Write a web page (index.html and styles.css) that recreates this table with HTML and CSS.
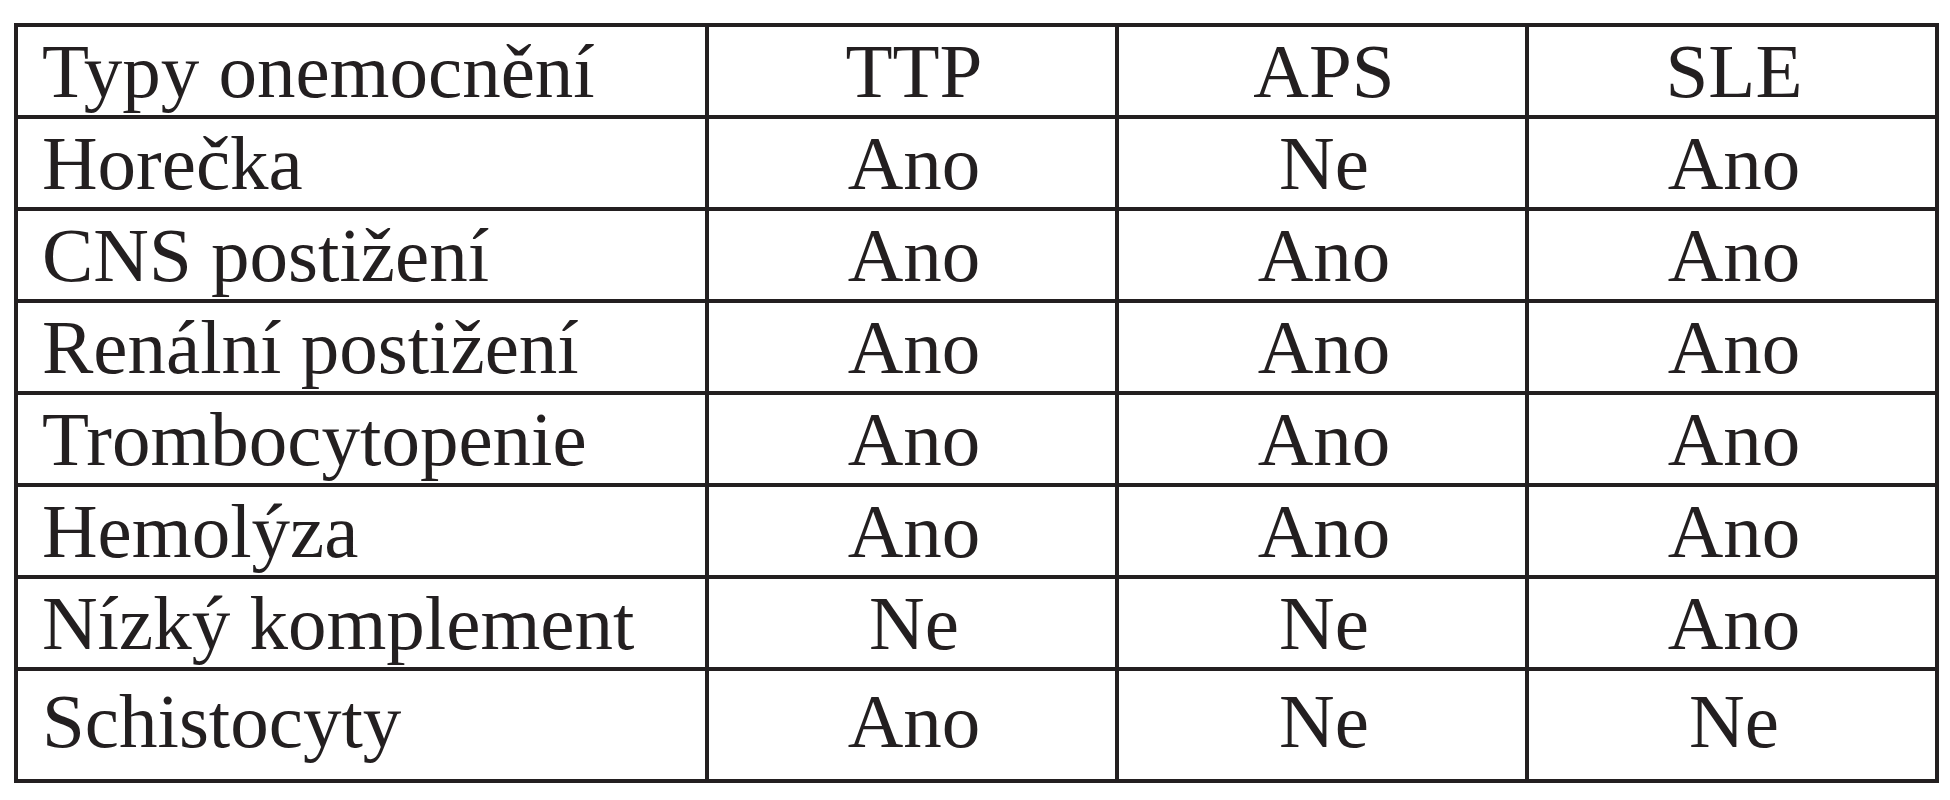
FILE: index.html
```html
<!DOCTYPE html>
<html lang="cs">
<head>
<meta charset="utf-8">
<title>Typy onemocnění</title>
<link rel="stylesheet" href="styles.css">
</head>
<body>
<table class="cmp">
  <colgroup>
    <col class="c-name">
    <col class="c-val">
    <col class="c-val">
    <col class="c-val">
  </colgroup>
  <tbody>
    <tr><td class="name">Typy onemocnění</td><td>TTP</td><td>APS</td><td>SLE</td></tr>
    <tr><td class="name">Horečka</td><td>Ano</td><td>Ne</td><td>Ano</td></tr>
    <tr><td class="name">CNS postižení</td><td>Ano</td><td>Ano</td><td>Ano</td></tr>
    <tr><td class="name">Renální postižení</td><td>Ano</td><td>Ano</td><td>Ano</td></tr>
    <tr><td class="name">Trombocytopenie</td><td>Ano</td><td>Ano</td><td>Ano</td></tr>
    <tr><td class="name">Hemolýza</td><td>Ano</td><td>Ano</td><td>Ano</td></tr>
    <tr><td class="name">Nízký komplement</td><td>Ne</td><td>Ne</td><td>Ano</td></tr>
    <tr class="last"><td class="name">Schistocyty</td><td>Ano</td><td>Ne</td><td>Ne</td></tr>
  </tbody>
</table>
</body>
</html>
```

FILE: styles.css
```css
html, body {
  margin: 0;
  padding: 0;
  background: #ffffff;
}

body {
  padding: 23px 0 0 14px;
  font-family: "Liberation Serif", "Times New Roman", serif;
  color: #231f20;
}

.cmp {
  border-collapse: collapse;
  border: 4px solid #231f20;
  width: 1922px;
  table-layout: fixed;
}

.c-name { width: 691px; }
.c-val { width: 410px; }

.cmp td {
  border: 4px solid #231f20;
  height: 88px;
  padding: 0 20px 0 24px;
  font-size: 77px;
  line-height: 1;
  text-align: center;
  vertical-align: middle;
  white-space: nowrap;
}

.cmp td.name {
  text-align: left;
}

.cmp tr.last td {
  height: 96px;
  vertical-align: top;
  padding-top: 12px;
}
```
